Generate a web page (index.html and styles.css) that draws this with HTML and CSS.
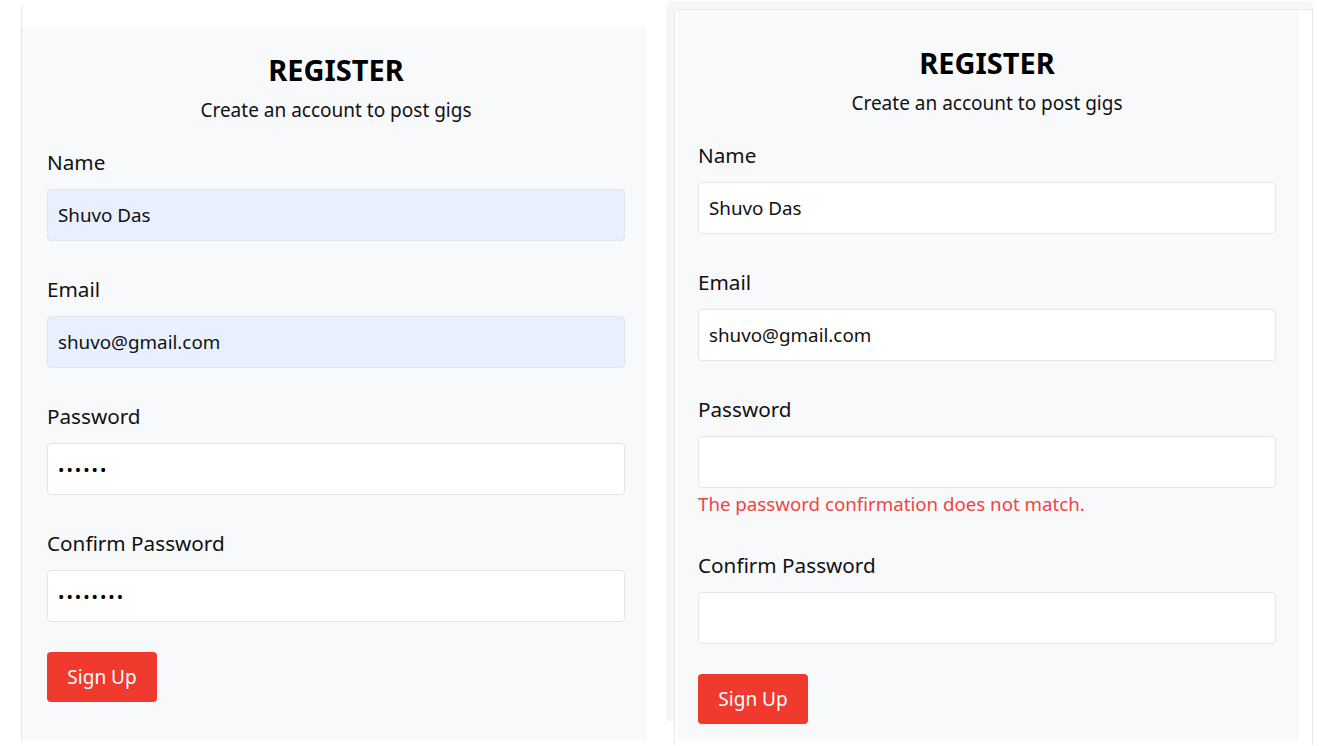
FILE: index.html
```html
<!DOCTYPE html>
<html lang="en">
<head>
<meta charset="utf-8">
<title>Register</title>
<link rel="stylesheet" href="styles.css">
</head>
<body>
<div class="page">
  <div class="frame-left">
    <div class="panel panel-left">
      <h1 class="title">REGISTER</h1>
      <p class="subtitle">Create an account to post gigs</p>
      <div class="group">
        <label class="label">Name</label>
        <div class="input autofill">Shuvo Das</div>
      </div>
      <div class="group">
        <label class="label">Email</label>
        <div class="input autofill">shuvo@gmail.com</div>
      </div>
      <div class="group">
        <label class="label">Password</label>
        <div class="input dots">&#8226;&#8226;&#8226;&#8226;&#8226;&#8226;</div>
      </div>
      <div class="group">
        <label class="label">Confirm Password</label>
        <div class="input dots">&#8226;&#8226;&#8226;&#8226;&#8226;&#8226;&#8226;&#8226;</div>
      </div>
      <button class="btn">Sign Up</button>
    </div>
  </div>
  <div class="frame-right">
    <div class="sheet">
      <div class="panel panel-right">
        <h1 class="title">REGISTER</h1>
        <p class="subtitle">Create an account to post gigs</p>
        <div class="group">
          <label class="label">Name</label>
          <div class="input">Shuvo Das</div>
        </div>
        <div class="group">
          <label class="label">Email</label>
          <div class="input">shuvo@gmail.com</div>
        </div>
        <div class="group group-error">
          <label class="label">Password</label>
          <div class="input"></div>
          <p class="error">The password confirmation does not match.</p>
        </div>
        <div class="group">
          <label class="label">Confirm Password</label>
          <div class="input"></div>
        </div>
        <button class="btn">Sign Up</button>
      </div>
    </div>
  </div>
</div>
</body>
</html>
```

FILE: styles.css
```css
* { box-sizing: border-box; }
html, body {
  margin: 0;
  padding: 0;
  background: #ffffff;
  height: 746px;
  overflow: hidden;
}
body {
  font-family: "Noto Sans", "Open Sans", sans-serif;
  color: #111111;
}
.page {
  display: flex;
  align-items: flex-start;
  gap: 19px;
  padding-left: 21px;
}
.frame-left {
  width: 626px;
  margin-top: 4px;
  padding-top: 23px;
  border-left: 1px solid #e3e6ea;
  border-top-left-radius: 5px;
}
.frame-right {
  width: 647px;
  margin-top: 1px;
  padding: 8px 0 0 8px;
  background: linear-gradient(#f6f7f9, #f6f7f9) no-repeat;
  background-size: 100% 720px;
  border-top-left-radius: 6px;
  border-top-right-radius: 6px;
}
.sheet {
  background: #ffffff;
  border-top: 1px solid #e8eaee;
  border-left: 1px solid #e8eaee;
  border-right: 1px solid #e3e6ea;
  padding-left: 3px;
  height: 736px;
}
.panel {
  background: #f8f9fb;
  display: flex;
  flex-direction: column;
}
.panel-left {
  width: 625px;
  height: 713px;
  padding: 25px 22px 0 25px;
}
.panel-right {
  width: 621px;
  height: 731px;
  padding: 35px 23px 0 20px;
}
.title {
  margin: 0;
  font-size: 29px;
  line-height: 36px;
  font-weight: 700;
  text-align: center;
  color: #000;
}
.subtitle {
  margin: 9px 0 0;
  font-size: 19px;
  line-height: 26px;
  text-align: center;
  color: #111;
}
.group {
  display: flex;
  flex-direction: column;
  margin-top: 24px;
}
.group + .group {
  margin-top: 33px;
}
.group-error + .group {
  margin-top: 34px;
}
.label {
  font-size: 20.7px;
  line-height: 30px;
  margin-bottom: 12px;
  color: #111;
}
.input {
  height: 52px;
  width: 578px;
  border: 1px solid #e2e5ea;
  border-radius: 4px;
  background: #ffffff;
  padding: 0 10px;
  display: flex;
  align-items: center;
  font-size: 18.8px;
  color: #111;
}
.autofill {
  background: #e8f0fe;
}
.dots {
  font-size: 17px;
  letter-spacing: 2px;
  color: #000;
}
.error {
  margin: 4px 0 0;
  font-size: 18.7px;
  line-height: 24px;
  color: #ef4444;
}
.btn {
  align-self: flex-start;
  margin-top: 30px;
  width: 110px;
  height: 50px;
  border: 0;
  border-radius: 4px;
  background: #f03a2e;
  color: #ffffff;
  font-family: "Noto Sans", "Open Sans", sans-serif;
  font-size: 19px;
  padding: 0;
}
```
